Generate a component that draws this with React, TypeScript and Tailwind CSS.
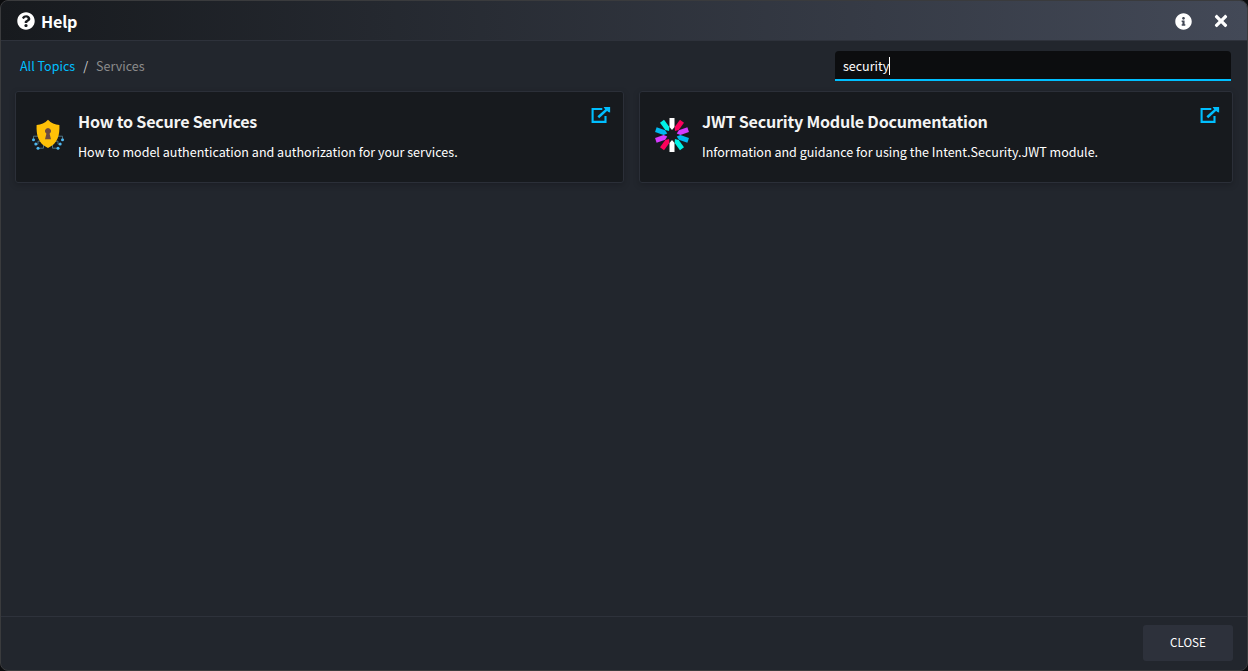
import type { ReactNode } from "react";
import { FaInfoCircle, FaQuestionCircle, FaTimes } from "react-icons/fa";

function ShieldIcon() {
  return (
    <svg width="34" height="34" viewBox="0 -0.7 34 34" fill="none">
      <g stroke="#4f7180" strokeWidth="1">
        <path d="M8 17.5H2.5V20M10 22.5H7V25.5H4.5M12.5 24.5V29.5H6.5" />
        <path d="M26 17.5H31.5V20M24 22.5H27V25.5H29.5M21.5 24.5V29.5H27.5" />
      </g>
      <g fill="#4fb8f0">
        <circle cx="2.5" cy="21" r="1.5" />
        <circle cx="4.8" cy="25.4" r="1.5" />
        <circle cx="7" cy="29.6" r="1.5" />
        <circle cx="31.5" cy="21" r="1.5" />
        <circle cx="29.2" cy="25.4" r="1.5" />
        <circle cx="27" cy="29.6" r="1.5" />
      </g>
      <path
        d="M17 1C14 4.2 10 6 5.6 6.3C5.2 16 7 25 17 29.2C27 25 28.8 16 28.4 6.3C24 6 20 4.2 17 1Z"
        fill="#ffc107"
      />
      <path d="M17 9.2A3.2 3.2 0 0 1 18.6 15.1L20 20.5H14L15.4 15.1A3.2 3.2 0 0 1 17 9.2Z" fill="#6d4c41" />
    </svg>
  );
}

const spokes = ["#ffffff", "#fb015b", "#d63aff", "#00b9f1", "#00f2e6"];

function JwtIcon() {
  return (
    <svg width="34" height="34" viewBox="-17 -17 34 34">
      {[...spokes, ...spokes].map((color, i) => (
        <path key={i} d="M-2.5 -17H2.5V-8L0 -5L-2.5 -8Z" fill={color} transform={`rotate(${i * 36})`} />
      ))}
    </svg>
  );
}

function ExternalLinkIcon() {
  return (
    <svg width="20" height="18" viewBox="0 0 20 18" fill="none" stroke="#00bfff">
      <path d="M11.3 3H1.6V15.9H14.5V10" strokeWidth="2.1" />
      <path d="M7.3 11.3L16 3.4" strokeWidth="2.6" />
      <path d="M12.6 0.9H19.1V6.6L17.3 6L13.6 2.6Z" fill="#00bfff" stroke="none" />
    </svg>
  );
}

type TopicProps = { icon: ReactNode; title: string; text: string };

function TopicCard({ icon, title, text }: TopicProps) {
  return (
    <article className="flex h-[92px] rounded-[3px] border border-[#2b2f38] bg-[#171a1e] pl-[15px] pr-[12px] shadow-[0_2px_6px_rgba(0,0,0,0.2)]">
      <div className="mt-[26px] w-[47px] shrink-0">{icon}</div>
      <div className="min-w-0 flex-1 whitespace-nowrap pt-[17px]">
        <h2 className="text-[16.1px] font-bold leading-6 tracking-[-0.22px] text-[#f4f4f4]">{title}</h2>
        <p className="mt-[9px] text-[12.54px] leading-5 text-white">{text}</p>
      </div>
      <a className="mt-[14px]" href="#" aria-label={title}>
        <ExternalLinkIcon />
      </a>
    </article>
  );
}

export default function App() {
  return (
    <div className="h-[671px] w-[1248px] bg-[#0b0c0e] font-['Noto_Sans_CJK_SC',sans-serif] text-white">
      <div className="flex h-full flex-col overflow-hidden rounded-lg border border-[#3a3b3d] bg-[#22262d]">
        <header className="flex h-10 shrink-0 items-center border-b border-[#2e323b] bg-linear-to-r/srgb from-[#171a1e] to-[#434957] pl-4 pr-[17px] pt-px">
          <FaQuestionCircle className="size-[18px]" />
          <h1 className="ml-[6px] text-[16.1px] font-bold leading-6 tracking-[-0.17px]">Help</h1>
          <FaInfoCircle className="ml-auto size-[17px]" />
          <FaTimes className="ml-[20px] size-[18px]" />
        </header>
        <div className="flex h-[50px] shrink-0 justify-between pl-[19px] pr-4 pt-[10px]">
          <nav className="flex h-[30px] items-center text-[12.54px]">
            <a href="#" className="text-[#00bfff]">All Topics</a>
            <span className="mx-[8px] text-[#cfcfcf]">/</span>
            <span className="text-[#8b8b8b]">Services</span>
          </nav>
          <div className="flex h-[30px] w-[396px] items-center rounded-t border-b-2 border-[#00bfff] bg-[#0c0d0f] pl-[8px] pt-[2px] text-[12.54px]">
            <span className="tracking-[-0.03px]">security</span>
            <span className="h-[18px] w-px bg-white" />
          </div>
        </div>
        <main className="grid flex-1 grid-cols-[609px_594px] content-start gap-x-[15px] pl-[14px]">
          <TopicCard
            icon={<ShieldIcon />}
            title="How to Secure Services"
            text="How to model authentication and authorization for your services."
          />
          <TopicCard
            icon={<JwtIcon />}
            title="JWT Security Module Documentation"
            text="Information and guidance for using the Intent.Security.JWT module."
          />
        </main>
        <footer className="flex h-[54px] shrink-0 items-start justify-end border-t border-[#2e323b] pr-[14px] pt-[8px]">
          <button className="h-9 w-[90px] rounded-[3px] bg-[#2d313b] pb-[3px] text-[11.64px]">CLOSE</button>
        </footer>
      </div>
    </div>
  );
}
